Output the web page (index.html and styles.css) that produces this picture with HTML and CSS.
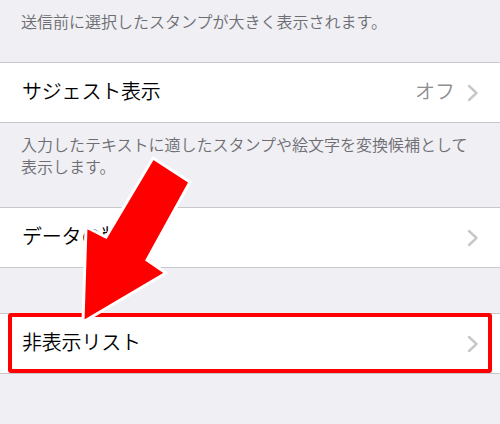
FILE: index.html
```html
<!DOCTYPE html>
<html lang="ja">
<head>
<meta charset="utf-8">
<link rel="stylesheet" href="styles.css">
</head>
<body>
<div class="page">
  <p class="note note-first">送信前に選択したスタンプが大きく表示されます。</p>
  <div class="row">
    <span class="label">サジェスト表示</span>
    <span class="value">オフ</span>
    <svg class="chev" width="12" height="18" viewBox="0 0 12 18"><polyline points="2,2 9.5,9 2,16" fill="none" stroke="#c7c7cc" stroke-width="2.4" stroke-linecap="round" stroke-linejoin="round"/></svg>
  </div>
  <p class="note note-second">入力したテキストに適したスタンプや絵文字を変換候補として<br>表示します。</p>
  <div class="row">
    <span class="label">データの削除</span>
    <svg class="chev" width="12" height="18" viewBox="0 0 12 18"><polyline points="2,2 9.5,9 2,16" fill="none" stroke="#c7c7cc" stroke-width="2.4" stroke-linecap="round" stroke-linejoin="round"/></svg>
  </div>
  <div class="spacer"></div>
  <div class="row">
    <span class="label">非表示リスト</span>
    <svg class="chev" width="12" height="18" viewBox="0 0 12 18"><polyline points="2,2 9.5,9 2,16" fill="none" stroke="#c7c7cc" stroke-width="2.4" stroke-linecap="round" stroke-linejoin="round"/></svg>
  </div>
  <div class="highlight"></div>
  <svg class="arrow" width="500" height="424" viewBox="0 0 500 424">
    <polygon points="153,158 190,182 147,260 166,273 83,322 86,227 106,237" fill="#ff0000" stroke="#ffffff" stroke-width="3" stroke-linejoin="miter"/>
  </svg>
</div>
</body>
</html>
```
FILE: styles.css
```css
html, body {
  margin: 0;
  padding: 0;
  background: #efeff4;
}
.page {
  position: relative;
  width: 500px;
  height: 424px;
  overflow: hidden;
  background: #efeff4;
  font-family: "Noto Sans CJK JP", "Noto Sans", sans-serif;
  font-weight: 350;
}
.note {
  margin: 0;
  padding: 10px 10px 0 21px;
  font-size: 16px;
  line-height: 22px;
  color: #6d6d72;
  box-sizing: border-box;
  white-space: nowrap;
}
.note-first {
  height: 62px;
}
.note-second {
  height: 84px;
}
.row {
  display: flex;
  align-items: center;
  height: 59px;
  background: #ffffff;
  border-top: 1px solid #c8c7cc;
  border-bottom: 1px solid #c8c7cc;
  padding: 0 21px 0 22px;
}
.label {
  flex: 1;
  font-size: 20px;
  line-height: 24px;
  color: #000000;
  letter-spacing: -0.2px;
  margin-top: -4px;
}
.value {
  font-size: 20px;
  line-height: 24px;
  color: #8e8e93;
  margin-right: 12px;
  margin-top: -4px;
}
.chev {
  display: block;
}
.spacer {
  height: 45px;
}
.highlight {
  position: absolute;
  left: 8px;
  top: 313px;
  width: 484px;
  height: 60px;
  box-sizing: border-box;
  border: 4px solid #ff0000;
  border-radius: 3px;
}
.arrow {
  position: absolute;
  left: 0;
  top: 0;
}
```
